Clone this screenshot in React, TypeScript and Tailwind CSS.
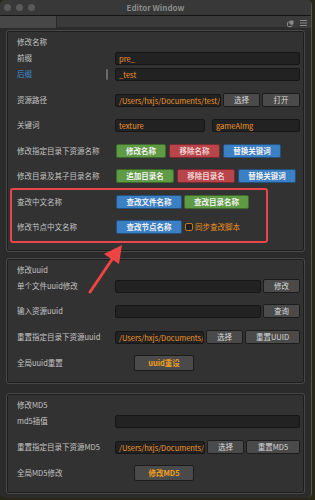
import React from "react";

const FONT = { fontFamily: '"Noto Sans CJK SC", "Noto Sans", sans-serif' };

function Label({ children, blue }: { children: React.ReactNode; blue?: boolean }) {
  return (
    <div className={`w-[98px] shrink-0 text-[7.5px] leading-none ${blue ? "text-[#3d8fd8]" : "text-[#c4c4c4]"}`}>
      {children}
    </div>
  );
}

function Input({ value, w, className = "" }: { value?: string; w?: string; className?: string }) {
  return (
    <div
      className={`h-[13px] ${w ?? "flex-1"} ${className} min-w-0 overflow-hidden whitespace-nowrap rounded-[2px] border border-[#161616] bg-[#222222] px-[3px] text-[7.5px] leading-[11px] text-[#f0962a]`}
    >
      {value}
    </div>
  );
}

function Btn({
  children,
  w,
  color = "gray",
  className = "",
}: {
  children: React.ReactNode;
  w: string;
  color?: "gray" | "green" | "red" | "blue" | "orange";
  className?: string;
}) {
  const c =
    color === "green"
      ? "bg-[#5f9b45] border-[#3d6a2a] text-[#f2f2f2] font-bold"
      : color === "red"
      ? "bg-[#b8454a] border-[#7a2a2e] text-[#f0d0d0] font-bold"
      : color === "blue"
      ? "bg-[#3b7fc4] border-[#24507e] text-[#f2f2f2] font-bold"
      : color === "orange"
      ? "bg-[#4a4a4a] border-[#1c1c1c] text-[#f0a020] font-bold"
      : "bg-[#4a4a4a] border-[#1c1c1c] text-[#d8d8d8]";
  return (
    <div
      className={`flex h-[14px] ${w} ${className} shrink-0 items-center justify-center rounded-[2px] border text-[7.5px] leading-none ${c}`}
    >
      {children}
    </div>
  );
}

function Row({ children, className = "" }: { children: React.ReactNode; className?: string }) {
  return <div className={`flex h-[14px] items-center ${className}`}>{children}</div>;
}

function Section({ children, className = "" }: { children: React.ReactNode; className?: string }) {
  return (
    <div
      className={`relative mx-[6px] rounded-[3px] border border-[#484848] bg-[#323232] pl-[10px] pr-[4px] shadow-[inset_0_0_0_1px_#1e1e1e] ${className}`}
    >
      {children}
    </div>
  );
}

export default function App() {
  return (
    <div className="h-[500px] w-[315px] overflow-hidden bg-[#2a2616]" style={FONT}>
      <div className="flex h-[498px] w-[312px] flex-col overflow-hidden rounded-[5px] border-r border-[#555] bg-[#2b2b2b]">
        {/* title bar */}
        <div className="relative flex h-[16px] shrink-0 items-center justify-center border-b border-[#151515] bg-[#383838]">
          <div className="absolute left-[4px] top-[4px] flex gap-[5px]">
            <div className="h-[7px] w-[7px] rounded-full bg-[#5a5a5a]" />
            <div className="h-[7px] w-[7px] rounded-full bg-[#5a5a5a]" />
            <div className="h-[7px] w-[7px] rounded-full bg-[#5a5a5a]" />
          </div>
          <div className="text-[8px] font-bold text-[#8c8c8c]">Editor Window</div>
        </div>
        {/* tab bar */}
        <div className="flex h-[12px] shrink-0 items-stretch bg-[#3a3a3a]">
          <div className="w-[57px] border-r border-[#2a2a2a] bg-[#474747]" />
          <div className="flex-1 border-b border-[#2a2a2a]" />
          <div className="flex items-center gap-[6px] pr-[4px] pt-[2px]">
            <svg width="7" height="7" viewBox="0 0 7 7">
              <rect x="0.5" y="2" width="4.5" height="4.5" rx="1" fill="none" stroke="#8a8a8a" strokeWidth="1" />
              <rect x="2.5" y="0.5" width="4" height="4" rx="1" fill="#8a8a8a" />
            </svg>
            <svg width="7" height="6" viewBox="0 0 7 6">
              <rect x="0" y="0" width="7" height="1" fill="#8a8a8a" />
              <rect x="0" y="2.5" width="7" height="1" fill="#8a8a8a" />
              <rect x="0" y="5" width="7" height="1" fill="#8a8a8a" />
            </svg>
          </div>
        </div>

        {/* content */}
        <div className="relative flex flex-1 flex-col pt-[2px]">
          <Section className="pb-[17px] pt-[4px]">
            <Row>
              <div className="text-[7.5px] leading-none text-[#c4c4c4]">修改名称</div>
            </Row>
            <Row className="mt-[2px]">
              <Label>前缀</Label>
              <Input value="pre_" />
            </Row>
            <Row className="mt-[2px]">
              <Label blue>
                <span className="flex items-center">
                  <span className="w-[89px]">后缀</span>
                  <span className="h-[11px] w-[2px] rounded bg-[#6a6a6a]" />
                </span>
              </Label>
              <Input value="_test" />
            </Row>
            <Row className="mt-[12px]">
              <Label>资源路径</Label>
              <Input value="/Users/hxjs/Documents/test/res" w="w-[110px]" />
              <Btn w="w-[37px]" className="ml-[2px]">选择</Btn>
              <Btn w="w-[38px]" className="ml-[2px]">打开</Btn>
            </Row>
            <Row className="mt-[11px]">
              <Label>关键词</Label>
              <Input value="texture" w="w-[90px]" />
              <Input value="gameAImg" className="ml-[7px]" />
            </Row>
            <Row className="mt-[12px]">
              <Label>修改指定目录下资源名称</Label>
              <Btn w="w-[50px]" color="green" className="ml-[1px]">修改名称</Btn>
              <Btn w="w-[51px]" color="red" className="ml-[3px]">移除名称</Btn>
              <Btn w="w-[58px]" color="blue" className="ml-[3px]">替换关键词</Btn>
            </Row>
            <Row className="mt-[11px]">
              <Label>修改目录及其子目录名称</Label>
              <Btn w="w-[58px]" color="green" className="ml-[1px]">追加目录名</Btn>
              <Btn w="w-[58px]" color="red" className="ml-[3px]">移除目录名</Btn>
              <Btn w="w-[58px]" color="blue" className="ml-[3px]">替换关键词</Btn>
            </Row>
            <Row className="mt-[12px]">
              <Label>查改中文名称</Label>
              <Btn w="w-[66px]" color="blue" className="ml-[1px]">查改文件名称</Btn>
              <Btn w="w-[65px]" color="green" className="ml-[2px]">查改目录名称</Btn>
            </Row>
            <Row className="mt-[11px]">
              <Label>修改节点中文名称</Label>
              <Btn w="w-[66px]" color="blue" className="ml-[1px]">查改节点名称</Btn>
              <div className="ml-[3px] h-[8px] w-[8px] rounded-[2px] border border-[#c07820] bg-[#1e1e1e]" />
              <div className="ml-[2px] text-[7.5px] leading-none text-[#e8901e]">同步查改脚本</div>
            </Row>
            {/* annotation box */}
            <div className="pointer-events-none absolute left-[3px] top-[157px] h-[55px] w-[258px] rounded-[3px] border-2 border-[#e8464a]" />
          </Section>

          <Section className="mt-[6px] pb-[12px] pt-[4px]">
            <Row>
              <div className="text-[7.5px] leading-none text-[#c4c4c4]">修改uuid</div>
            </Row>
            <Row className="mt-[2px]">
              <Label>单个文件uuid修改</Label>
              <Input />
              <Btn w="w-[37px]" className="ml-[2px]">修改</Btn>
            </Row>
            <Row className="mt-[11px]">
              <Label>输入资源uuid</Label>
              <Input />
              <Btn w="w-[37px]" className="ml-[2px]">查询</Btn>
            </Row>
            <Row className="mt-[12px]">
              <Label>重置指定目录下资源uuid</Label>
              <Input value="/Users/hxjs/Documents/test" w="w-[91px]" />
              <Btn w="w-[37px]" className="ml-[2px]">选择</Btn>
              <Btn w="w-[55px]" className="ml-[2px]">重置UUID</Btn>
            </Row>
            <Row className="mt-[11px] h-[16px]">
              <Label>全局uuid重置</Label>
              <Btn w="w-[60px]" color="orange" className="ml-[19px] h-[16px]">uuid重设</Btn>
            </Row>
          </Section>

          <Section className="mt-[9px] pb-[12px] pt-[4px]">
            <Row>
              <div className="text-[7.5px] leading-none text-[#c4c4c4]">修改MD5</div>
            </Row>
            <Row className="mt-[2px]">
              <Label>md5插值</Label>
              <Input />
            </Row>
            <Row className="mt-[12px]">
              <Label>重置指定目录下资源MD5</Label>
              <Input value="/Users/hxjs/Documents/test" w="w-[92px]" />
              <Btn w="w-[37px]" className="ml-[2px]">选择</Btn>
              <Btn w="w-[54px]" className="ml-[2px]">重置MD5</Btn>
            </Row>
            <Row className="mt-[11px] h-[16px]">
              <Label>全局MD5修改</Label>
              <Btn w="w-[60px]" color="orange" className="ml-[19px] h-[16px]">修改MD5</Btn>
            </Row>
          </Section>

          {/* red arrow annotation */}
          <svg className="pointer-events-none absolute left-0 top-0" width="312" height="470" viewBox="0 0 312 470">
            <line x1="90" y1="264" x2="113" y2="230" stroke="#ee4444" strokeWidth="3" strokeLinecap="round" />
            <polygon points="122,217 104,226 119,236" fill="#ee4444" />
          </svg>
        </div>
      </div>
    </div>
  );
}
